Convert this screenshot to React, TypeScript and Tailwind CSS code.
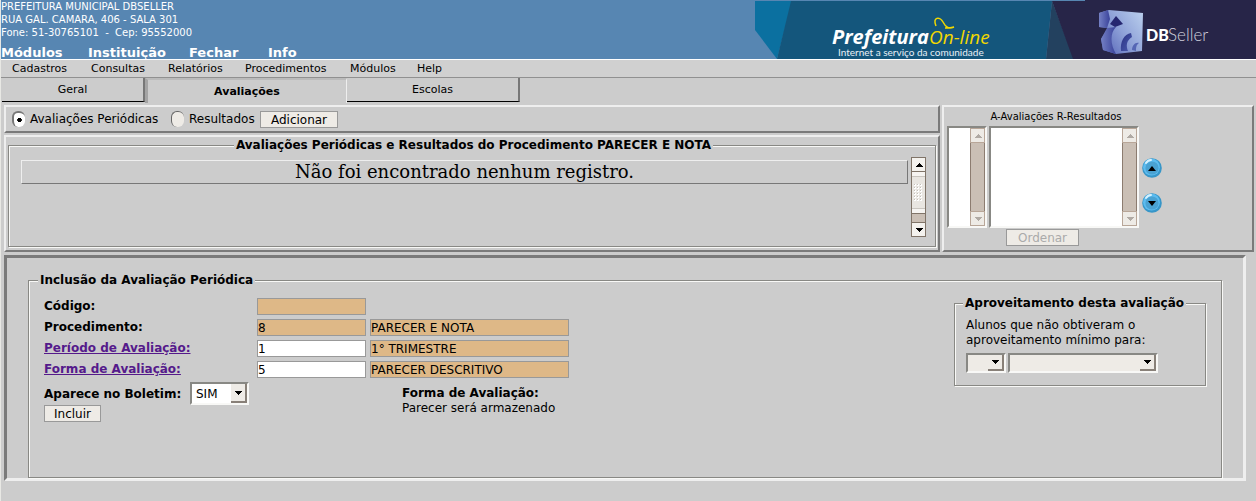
import React from "react";

function Banner() {
  return (
    <svg
      viewBox="0 0 501 59"
      className="h-[59px] w-[501px] shrink-0"
      role="img"
      aria-label="Prefeitura On-line - DBSeller"
    >
      <defs>
        <linearGradient id="face" x1="0" y1="0.8" x2="1" y2="0.1">
          <stop offset="0" stopColor="#5766b8" />
          <stop offset="0.5" stopColor="#8fa2d8" />
          <stop offset="1" stopColor="#b8cdec" />
        </linearGradient>
        <linearGradient id="side" x1="0" y1="0" x2="1" y2="0">
          <stop offset="0" stopColor="#7480c4" />
          <stop offset="1" stopColor="#39429a" />
        </linearGradient>
        <linearGradient id="arch" x1="0" y1="0" x2="1" y2="1">
          <stop offset="0" stopColor="#2a3282" />
          <stop offset="1" stopColor="#4c5cb0" />
        </linearGradient>
      </defs>
      <polygon points="0,1 37,1 22,59 0,30" fill="#0b70a0" />
      <polygon points="36,1 297,1 291,59 22,59" fill="#14567c" />
      <polygon points="297,1 291,59 319,59" fill="#23415f" />
      <polygon points="297,1 330,1 330,0 501,0 501,59 318,59" fill="#272548" />
      <text x="77" y="44" fill="#fff" fontFamily="Open Sans" fontWeight="700" fontStyle="italic" fontSize="20">
        Prefeitura
      </text>
      <text x="174" y="44" fill="#f2d800" fontFamily="Open Sans" fontStyle="italic" fontSize="19">
        On-line
      </text>
      <path
        d="M181 26 C177 17 185 16 188 22 C191 28 194 29 199 27 C196 28 193 28 190 28"
        fill="none"
        stroke="#f2d800"
        strokeWidth="1.5"
      />
      <text x="83" y="56" fill="#e8f0f6" fontFamily="Lato" fontSize="10">
        Internet a serviço da comunidade
      </text>
      <path d="M344 13 L354 10 L388 13 L387 51 L361 54 L348 50 L346 39 L353 28 L344 27 Z" fill="url(#face)" />
      <path d="M344 13 L353 10 L355 19 L352 28 L344 27 Z" fill="url(#side)" />
      <path d="M352 28 L361 27 C355 33 355 44 361 54 L348 50 L346 39 Z" fill="url(#side)" />
      <path d="M361 16 L368 24 L360 27 L355 24 Z" fill="#252670" />
      <path d="M366 51 C365 42 369 34 376 33 L377 37 C371 41 371 46 373 51 Z" fill="url(#arch)" />
      <path d="M377 50 C377 46 380 42 384 43 C381 45 381 48 381 51 Z" fill="#5566b4" />
      <text x="391" y="41" fill="#fff" fontFamily="Lato" fontWeight="900" fontSize="16">
        DB
      </text>
      <text x="413" y="41" fill="#d0d0dc" fontFamily="Lato" fontWeight="300" fontSize="17">
        Seller
      </text>
    </svg>
  );
}

function Arrow({ down = false }: { down?: boolean }) {
  return (
    <svg viewBox="0 0 8 4" className="h-1 w-2" aria-hidden="true" shapeRendering="crispEdges">
      <path d={down ? "M0 0H8L4 4Z" : "M0 4H8L4 0Z"} fill="currentColor" />
    </svg>
  );
}

function ScrollBar({ disabled = false }: { disabled?: boolean }) {
  const tone = disabled
    ? "border-[#b8a698] bg-[#eeebe6] text-[#b0aaa4]"
    : "border-[#807468] bg-[#f4f2ee] text-black";
  const button = "flex h-[15px] shrink-0 items-center justify-center border " + tone;
  return (
    <div className="flex w-[15px] shrink-0 flex-col">
      <button type="button" disabled={disabled} aria-label="Rolar para cima" className={button}>
        <Arrow />
      </button>
      {!disabled && (
        <div className="flex h-[41px] shrink-0 flex-col items-center justify-center border-x border-[#807468] bg-[#e9e6e1]">
          <div className="h-[5px] w-full border-b border-[#c9c5bf] bg-[#f6f4f1]" />
          <div className="flex flex-1 items-center">
            <svg viewBox="0 0 9 18" className="h-[18px] w-[9px]" aria-hidden="true" shapeRendering="crispEdges">
              {[0, 3, 6, 9, 12, 15].map((y) =>
                [0, 3, 6].map((x) => (
                  <g key={x + "-" + y}>
                    <rect x={x} y={y} width="2" height="2" fill="#fff" />
                    <rect x={x} y={y} width="1" height="1" fill="#c4c0ba" />
                  </g>
                )),
              )}
            </svg>
          </div>
          <div className="h-[5px] w-full border-t border-[#c9c5bf] bg-[#f6f4f1]" />
        </div>
      )}
      <div
        className={
          disabled
            ? "flex-1 border-x border-[#8c7c70] bg-[#cabfb5]"
            : "flex-1 border-x border-t border-[#807468] bg-[#cabfb5]"
        }
      />
      <button type="button" disabled={disabled} aria-label="Rolar para baixo" className={button}>
        <Arrow down />
      </button>
    </div>
  );
}

const sunken = "border-2 border-t-[#888884] border-l-[#888884] border-r-[#f8f8f6] border-b-[#f8f8f6]";
const raised = "border-2 border-t-[#eee] border-l-[#eee] border-r-[#7a7a7a] border-b-[#7a7a7a]";
const groove = "border border-[#888884] shadow-[1px_1px_0_#f8f8f6,inset_1px_1px_0_#f8f8f6]";

function ListBox({ label, width }: { label: string; width: string }) {
  return (
    <div className={"flex h-[102px] bg-white " + sunken + " " + width}>
      <select multiple aria-label={label} className="min-w-0 flex-1 appearance-none overflow-hidden bg-white" />
      <ScrollBar disabled />
    </div>
  );
}

function Combo({ label, width, text, disabled }: { label: string; width: string; text?: string; disabled?: boolean }) {
  return (
    <div className={"relative flex " + sunken + " " + width + (disabled ? " h-5 bg-[#eeebe6]" : " h-[23px] bg-white")}>
      <select
        id={label}
        aria-label={label}
        disabled={disabled}
        className="w-full appearance-none px-1 text-[12px] leading-4 text-black"
      >
        {text && <option>{text}</option>}
      </select>
      <span className="pointer-events-none absolute inset-y-0 right-0 flex w-4 items-center justify-center border-r-2 border-b-2 border-[#888078] bg-[#eeebe6] text-black">
        <Arrow down />
      </span>
    </div>
  );
}

function MoveButton({ down = false }: { down?: boolean }) {
  return (
    <button type="button" aria-label={down ? "Mover para baixo" : "Mover para cima"} className="block h-5 w-5">
      <svg viewBox="0 0 20 20" className="h-5 w-5" aria-hidden="true">
        <circle cx="10" cy="10" r="9.8" fill="#3796c8" />
        <circle cx="9.5" cy="9.2" r="8.4" fill="#5cbcf0" />
        <circle cx="10" cy="10" r="6.6" fill="#4aa2d2" />
        <path d="M4 5 Q6 2 9 2" stroke="#d8f2ff" strokeWidth="2" fill="none" strokeLinecap="round" />
        <path d={down ? "M6 8H14L10 13Z" : "M6 13H14L10 8Z"} fill="#000" />
      </svg>
    </button>
  );
}

const plainButton = "border border-[#999] bg-[#eeebe6] text-[12px] leading-4";

function Field({ id, value, wide, locked }: { id: string; value: string; wide?: boolean; locked?: boolean }) {
  return (
    <input
      id={id}
      aria-label={id}
      defaultValue={value}
      readOnly={locked}
      className={
        "h-[17px] border border-[#999] text-[12px] leading-4 " +
        (wide ? "w-[199px] " : "w-[109px] ") +
        (locked ? "bg-[#deb887]" : "bg-white")
      }
    />
  );
}

export default function App() {
  return (
    <div className="min-h-screen border-l border-[#e8e8e4] bg-[#ccc] font-['DejaVu_Sans',sans-serif] text-[12px] text-black">
      <header className="flex h-[59px] justify-between bg-[#5786b2] text-white">
        <div className="flex flex-col justify-between">
          <div className="text-[10px] leading-[13px]">
            <p>PREFEITURA MUNICIPAL DBSELLER</p>
            <p>RUA GAL. CAMARA, 406 - SALA 301</p>
            <p className="whitespace-pre">Fone: 51-30765101  -  Cep: 95552000</p>
          </div>
          <nav className="grid grid-cols-[87px_101px_79px_auto] text-[13px] leading-[13px] font-bold">
            <a href="#modulos">Módulos</a>
            <a href="#instituicao">Instituição</a>
            <a href="#fechar">Fechar</a>
            <a href="#info">Info</a>
          </nav>
        </div>
        <Banner />
      </header>

      <nav className="grid h-[19px] grid-cols-[79px_77px_77px_105px_67px_auto] border-t border-b border-t-white border-b-[#909090] bg-[#d0d0d0] px-[11px] text-[11px] leading-[17px]">
        <a href="#cadastros">Cadastros</a>
        <a href="#consultas">Consultas</a>
        <a href="#relatorios">Relatórios</a>
        <a href="#procedimentos">Procedimentos</a>
        <a href="#menu-modulos">Módulos</a>
        <a href="#help">Help</a>
      </nav>

      <nav className="flex h-[25px] px-px text-[11px]">
        <a href="#geral" className="h-6 w-[143px] border-r-2 border-b border-r-[#777] border-b-black text-center leading-[23px]">
          Geral
        </a>
        <a href="#avaliacoes" className="w-[202px] border-t-2 border-r border-l-[3px] border-t-[#bbb] border-r-[#eee] border-l-[#a4a4a4] text-center leading-[23px] font-bold">
          Avaliações
        </a>
        <a href="#escolas" className="h-6 w-[173px] border-r-2 border-b border-r-[#777] border-b-black text-center leading-[23px]">
          Escolas
        </a>
      </nav>

      <main className="pt-[2px] pr-[2px] pl-[3px]">
        <div className="flex gap-[2px]">
          <div className="flex min-w-0 flex-1 flex-col gap-[2px]">
            <form className={"flex h-7 items-center pl-[6px] " + raised}>
              <label className="flex w-[159px] items-center gap-[5px] whitespace-nowrap">
                <input
                  type="radio"
                  name="tipo"
                  defaultChecked
                  className="h-4 w-[13px] appearance-none rounded-[6px] border-t-2 border-l-2 border-[#777] bg-white bg-[radial-gradient(circle,#000_2px,transparent_2.5px)]"
                />
                Avaliações Periódicas
              </label>
              <label className="flex w-[89px] items-center gap-[5px]">
                <input
                  type="radio"
                  name="tipo"
                  className="h-4 w-[13px] appearance-none rounded-[6px] border-t border-l border-[#666] bg-[#eeebe6]"
                />
                Resultados
              </label>
              <button type="button" className={"h-[17px] w-[78px] " + plainButton}>
                Adicionar
              </button>
            </form>

            <section className={"h-[117px] px-[2px] pb-[2px] " + raised}>
              <fieldset className={"flex h-[110px] min-w-0 pr-[9px] pb-2 pl-3 " + groove}>
                <legend className="mx-auto bg-[#ccc] px-[2px] text-[12px] leading-4 font-bold">
                  Avaliações Periódicas e Resultados do Procedimento PARECER E NOTA
                </legend>
                <div className="flex w-full gap-[3px] pt-1">
                  <p className="mt-[3px] h-6 min-w-0 flex-1 border border-t-[#eee] border-r-[#777] border-b-[#777] border-l-[#eee] text-center font-['DejaVu_Serif',serif] text-[18px] leading-[22px]">
                    Não foi encontrado nenhum registro.
                  </p>
                  <div className="flex h-[80px]">
                    <ScrollBar />
                  </div>
                </div>
              </fieldset>
            </section>
          </div>

          <section className={"w-[312px] shrink-0 pl-[3px] " + raised}>
            <p className="w-[218px] text-center text-[10px] leading-[19px]">A-Avaliações R-Resultados</p>
            <div className="flex items-center gap-[2px]">
              <ListBox label="Tipo" width="w-10" />
              <ListBox label="Itens" width="w-[150px]" />
              <div className="ml-px flex flex-col gap-[15px] pt-4">
                <MoveButton />
                <MoveButton down />
              </div>
            </div>
            <button type="button" disabled className={"mt-px ml-[59px] block h-[17px] w-[73px] text-[#aaa] " + plainButton}>
              Ordenar
            </button>
          </section>
        </div>

        <section className="mt-[3px] mr-2 h-[226px] border-[3px] border-t-[#7a7a7a] border-r-[#eee] border-b-[#eee] border-l-[#7a7a7a] px-[21px] pt-[14px]">
          <fieldset className={"h-[206px] min-w-0 px-[9px] " + groove}>
            <legend className="bg-[#ccc] px-[2px] leading-4 font-bold">Inclusão da Avaliação Periódica</legend>
            <div className="flex justify-between pl-[6px]">
              <form className="pt-[10px]">
                <div className="grid grid-cols-[213px_auto] gap-y-1 leading-[17px]">
                  <label htmlFor="codigo" className="font-bold">Código:</label>
                  <div className="flex"><Field id="codigo" value="" locked /></div>
                  <label htmlFor="procedimento" className="font-bold">Procedimento:</label>
                  <div className="flex gap-1">
                    <Field id="procedimento" value="8" locked />
                    <Field id="procedimento-nome" value="PARECER E NOTA" wide locked />
                  </div>
                  <a href="#periodo" className="font-bold text-[#551a8b] underline">Período de Avaliação:</a>
                  <div className="flex gap-1">
                    <Field id="periodo" value="1" />
                    <Field id="periodo-nome" value="1° TRIMESTRE" wide locked />
                  </div>
                  <a href="#forma" className="font-bold text-[#551a8b] underline">Forma de Avaliação:</a>
                  <div className="flex gap-1">
                    <Field id="forma" value="5" />
                    <Field id="forma-nome" value="PARECER DESCRITIVO" wide locked />
                  </div>
                </div>
                <div className="mt-1 flex">
                  <div className="w-[358px]">
                    <div className="flex items-center gap-1">
                      <label htmlFor="boletim" className="w-[142px] font-bold whitespace-nowrap">Aparece no Boletim:</label>
                      <Combo label="boletim" width="w-[59px]" text="SIM" />
                    </div>
                    <button type="button" className={"block h-[17px] w-[57px] " + plainButton}>Incluir</button>
                  </div>
                  <p className="pt-1 leading-[15px]">
                    <b className="block">Forma de Avaliação:</b>
                    Parecer será armazenado
                  </p>
                </div>
              </form>

              <fieldset className={"mt-[7px] mr-[6px] h-[91px] w-[252px] px-[11px] " + groove}>
                <legend className="-ml-[3px] bg-[#ccc] px-[2px] leading-4 font-bold">Aproveitamento desta avaliação</legend>
                <p className="pt-[7px] pb-[5px] leading-[15px]">
                  Alunos que não obtiveram o
                  <br />
                  aproveitamento mínimo para:
                </p>
                <div className="flex gap-[2px]">
                  <Combo label="Tipo mínimo" width="w-10" disabled />
                  <Combo label="Avaliação mínima" width="w-[150px]" disabled />
                </div>
              </fieldset>
            </div>
          </fieldset>
        </section>
      </main>
    </div>
  );
}
